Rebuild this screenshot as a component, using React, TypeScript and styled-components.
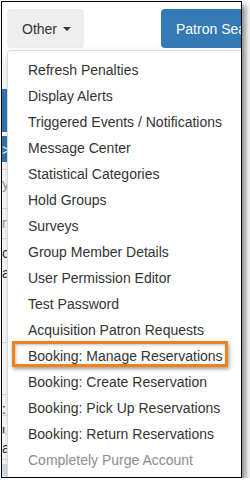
import React from "react";
import styled, { createGlobalStyle } from "styled-components";

type MenuEntry = {
  readonly label: string;
  readonly disabled?: boolean;
  readonly highlight?: boolean;
};

type BackdropRow = {
  readonly height: number;
  readonly kind: "gap" | "blue" | "row" | "tint";
  readonly text?: string;
  readonly muted?: boolean;
};

const menuEntries: MenuEntry[] = [
  { label: "Refresh Penalties" },
  { label: "Display Alerts" },
  { label: "Triggered Events / Notifications" },
  { label: "Message Center" },
  { label: "Statistical Categories" },
  { label: "Hold Groups" },
  { label: "Surveys" },
  { label: "Group Member Details" },
  { label: "User Permission Editor" },
  { label: "Test Password" },
  { label: "Acquisition Patron Requests" },
  { label: "Booking: Manage Reservations", highlight: true },
  { label: "Booking: Create Reservation" },
  { label: "Booking: Pick Up Reservations" },
  { label: "Booking: Return Reservations" },
  { label: "Completely Purge Account", disabled: true },
];

// slivers of the patron page that peek out left of the open menu
const backdropRows: BackdropRow[] = [
  { height: 41, kind: "gap" },
  { height: 43, kind: "blue" },
  { height: 4, kind: "gap" },
  { height: 26, kind: "blue", text: ">" },
  { height: 8, kind: "row" },
  { height: 39, kind: "row", text: "y", muted: true },
  { height: 30, kind: "row", text: "re", muted: true },
  { height: 104, kind: "row", text: "c\na" },
  { height: 52, kind: "row" },
  { height: 21, kind: "row", text: ":" },
  { height: 18, kind: "row", text: "ui" },
  { height: 26, kind: "row", text: "ar" },
  { height: 4, kind: "gap" },
  { height: 12, kind: "tint" },
];

const GlobalStyle = createGlobalStyle`
  html, body {
    margin: 0;
    padding: 0;
    background: #fff;
  }
  body {
    font-family: "Liberation Sans", Arial, sans-serif;
    font-size: 14px;
    color: #333;
  }
`;

const Frame = styled.div`
  position: relative;
  margin: 1px 0 0 1px;
  width: 239px;
  height: 475px;
  border: 1px solid #000;
  box-shadow: 4px 4px 6px rgba(0, 0, 0, 0.45);
  background: #fff;
  overflow: hidden;
`;

const Toolbar = styled.div`
  display: flex;
  align-items: flex-start;
  gap: 77px;
  padding: 7px 0 0 5px;
  height: 39px;
`;

const DropdownWrap = styled.div`
  position: relative;
`;

const OtherButton = styled.div`
  display: flex;
  align-items: center;
  box-sizing: border-box;
  width: 77px;
  height: 39px;
  padding-left: 15px;
  border-radius: 4px;
  background: #eeeeee;
  color: #333;
  white-space: nowrap;
`;

const Caret = styled.span`
  display: inline-block;
  margin-left: 6px;
  margin-top: 1px;
  border-top: 4px solid #333;
  border-left: 4px solid transparent;
  border-right: 4px solid transparent;
`;

const PrimaryButton = styled.div`
  display: flex;
  align-items: center;
  box-sizing: border-box;
  width: 120px;
  height: 39px;
  padding-left: 15px;
  border-radius: 4px;
  background: #337ab7;
  color: #fff;
  white-space: nowrap;
`;

const Menu = styled.ul`
  position: absolute;
  top: 100%;
  left: 0;
  z-index: 10;
  min-width: 262px;
  margin: 2px 0 0;
  padding: 6px 0 5px;
  list-style: none;
  background: #fff;
  border: 1px solid rgba(0, 0, 0, 0.15);
  border-radius: 4px;
  box-shadow: 0 6px 12px rgba(0, 0, 0, 0.175);
`;

const MenuItem = styled.li<{ $disabled?: boolean; $highlight?: boolean }>`
  position: relative;
  padding: 3px 20px;
  line-height: 20px;
  white-space: nowrap;
  color: ${({ $disabled }) => ($disabled ? "#8c8c8c" : "#333")};

  ${({ $highlight }) =>
    $highlight &&
    `
    &::after {
      content: "";
      position: absolute;
      left: 4px;
      top: -2px;
      width: 216px;
      height: 26px;
      box-sizing: border-box;
      border: 3px solid #f0821e;
      box-shadow: 1px 2px 4px rgba(0, 0, 0, 0.4),
        inset 1px 1px 3px rgba(0, 0, 0, 0.25);
    }
  `}
`;

const Backdrop = styled.div`
  display: flex;
  flex-direction: column;
`;

const Strip = styled.div<{ $kind: BackdropRow["kind"]; $muted?: boolean }>`
  box-sizing: border-box;
  overflow: hidden;
  padding-top: 4px;
  font-size: 14px;
  line-height: 20px;
  white-space: pre;
  background: ${({ $kind }) =>
    $kind === "blue" ? "#337ab7" : $kind === "tint" ? "#d9e2ea" : "transparent"};
  color: ${({ $kind, $muted }) =>
    $kind === "blue" ? "#fff" : $muted ? "#999" : "#333"};
  border-bottom: ${({ $kind }) => ($kind === "row" ? "1px solid #ddd" : "none")};
`;

const App = () => {
  return (
    <>
      <GlobalStyle />
      <Frame>
        <Toolbar>
          <DropdownWrap>
            <OtherButton>
              Other
              <Caret />
            </OtherButton>
            <Menu>
              {menuEntries.map((entry) => (
                <MenuItem
                  key={entry.label}
                  $disabled={entry.disabled}
                  $highlight={entry.highlight}
                >
                  {entry.label}
                </MenuItem>
              ))}
            </Menu>
          </DropdownWrap>
          <PrimaryButton>Patron Search</PrimaryButton>
        </Toolbar>
        <Backdrop>
          {backdropRows.map((row, i) => (
            <Strip
              key={i}
              $kind={row.kind}
              $muted={row.muted}
              style={{ height: row.height }}
            >
              {row.text}
            </Strip>
          ))}
        </Backdrop>
      </Frame>
    </>
  );
};

export default App;
